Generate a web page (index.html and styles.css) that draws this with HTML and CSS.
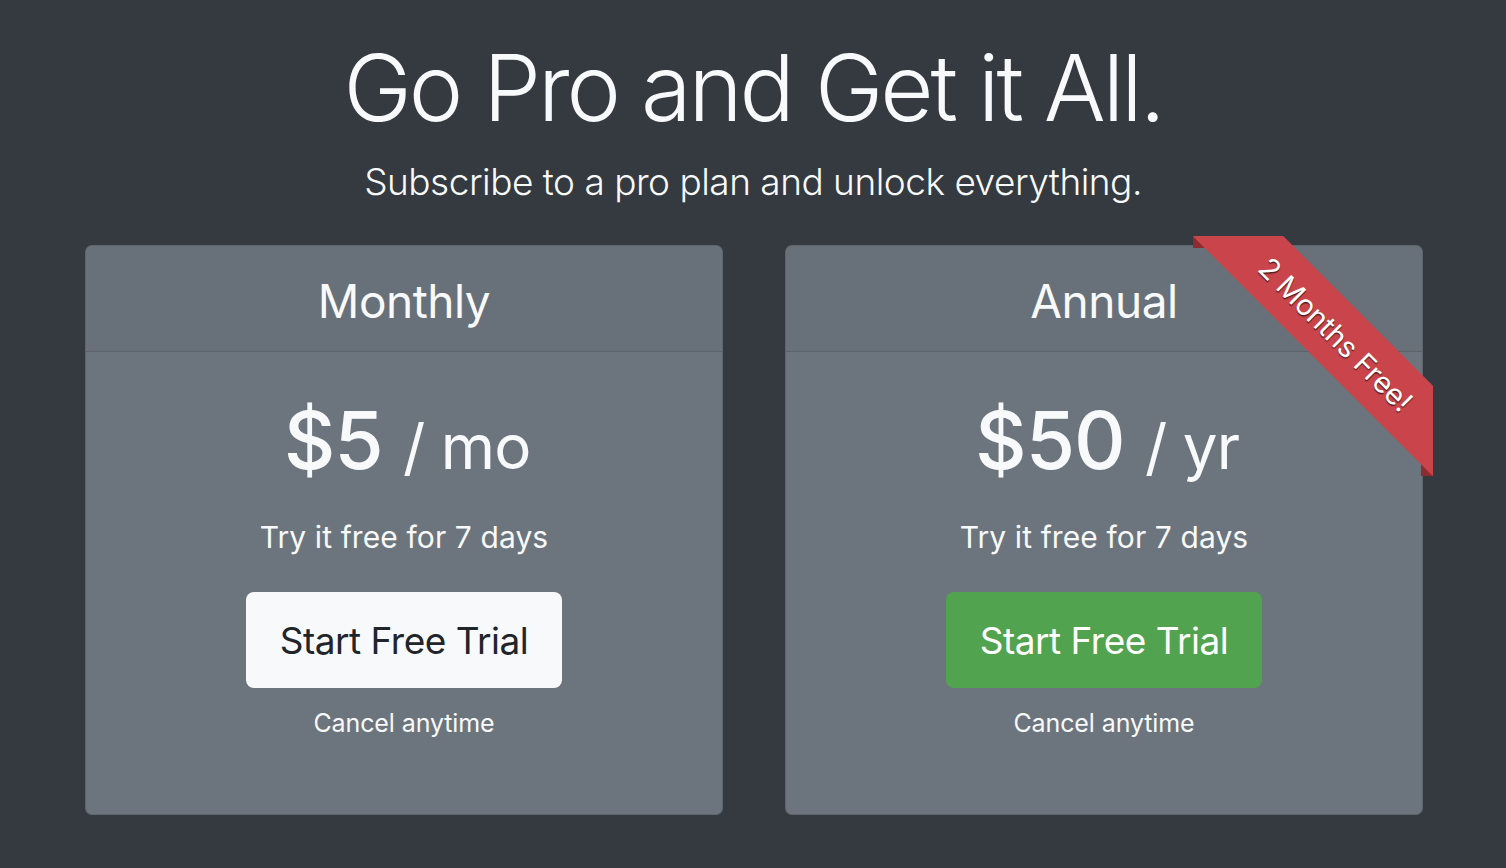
FILE: index.html
```html
<!DOCTYPE html>
<html lang="en">
<head>
<meta charset="utf-8">
<title>Go Pro</title>
<link rel="stylesheet" href="styles.css">
</head>
<body>
<main class="page">
  <header class="hero">
    <h1 class="hero-title">Go Pro and Get it All.</h1>
    <p class="hero-lead">Subscribe to a pro plan and unlock everything.</p>
  </header>
  <section class="plans">
    <div class="card">
      <div class="card-header"><h2 class="plan-name">Monthly</h2></div>
      <div class="card-body">
        <div class="price">$5 <small class="price-unit">/ mo</small></div>
        <p class="trial">Try it free for 7 days</p>
        <a class="btn btn-light">Start Free Trial</a>
        <p class="cancel">Cancel anytime</p>
      </div>
    </div>
    <div class="card">
      <div class="ribbon-wrap">
        <span class="fold fold-top"></span>
        <span class="fold fold-bottom"></span>
        <div class="ribbon"><span class="ribbon-text">2 Months Free!</span></div>
      </div>
      <div class="card-header"><h2 class="plan-name">Annual</h2></div>
      <div class="card-body">
        <div class="price">$50 <small class="price-unit">/ yr</small></div>
        <p class="trial">Try it free for 7 days</p>
        <a class="btn btn-success">Start Free Trial</a>
        <p class="cancel">Cancel anytime</p>
      </div>
    </div>
  </section>
</main>
</body>
</html>
```
FILE: styles.css
```css
html, body {
  margin: 0;
  padding: 0;
}
body {
  background: #343a40;
  color: #f8f9fa;
  font-family: Inter, Roboto, "Liberation Sans", sans-serif;
  height: 868px;
  overflow: hidden;
}
.page {
  display: flex;
  flex-direction: column;
  align-items: center;
}
.hero {
  text-align: center;
  padding-top: 33px;
}
.hero-title {
  margin: 0;
  font-size: 92px;
  font-weight: 300;
  line-height: 110px;
  letter-spacing: -3px;
}
.hero-lead {
  margin: 17px 0 0;
  font-size: 37px;
  font-weight: 300;
  line-height: 44px;
  letter-spacing: -0.5px;
}
.plans {
  margin-top: 41px;
  padding-left: 2px;
  box-sizing: border-box;
  display: grid;
  grid-template-columns: 638px 638px;
  gap: 62px;
  justify-content: center;
  width: 100%;
}
.card {
  position: relative;
  height: 570px;
  box-sizing: border-box;
  background: #6c757d;
  border: 1px solid rgba(0, 0, 0, 0.125);
  border-radius: 7px;
  display: flex;
  flex-direction: column;
}
.card-header {
  height: 106px;
  box-sizing: border-box;
  padding-top: 4px;
  background: rgba(0, 0, 0, 0.03);
  border-bottom: 1px solid rgba(0, 0, 0, 0.125);
  border-radius: 6px 6px 0 0;
  display: flex;
  align-items: center;
  justify-content: center;
}
.plan-name {
  margin: 0;
  font-size: 46px;
  font-weight: 400;
  line-height: 1;
  letter-spacing: -0.5px;
}
.card-body {
  display: flex;
  flex-direction: column;
  align-items: center;
  padding-top: 40px;
}
.price {
  font-size: 80px;
  font-weight: 500;
  line-height: 96px;
  letter-spacing: -1px;
  padding-left: 6px;
}
.price-unit {
  font-size: 62px;
  font-weight: 400;
}
.trial {
  margin: 22px 0 0;
  font-size: 30px;
  line-height: 40px;
  letter-spacing: 0.1px;
}
.btn {
  margin-top: 35px;
  width: 316px;
  height: 96px;
  box-sizing: border-box;
  border-radius: 8px;
  display: flex;
  align-items: center;
  justify-content: center;
  font-size: 37px;
  letter-spacing: -0.5px;
}
.btn-light {
  background: #f8f9fa;
  color: #212529;
}
.btn-success {
  background: #51a34f;
  color: #ffffff;
}
.cancel {
  margin: 18px 0 0;
  font-size: 25px;
  line-height: 34px;
  letter-spacing: -0.1px;
}
.ribbon-wrap {
  position: absolute;
  top: -10px;
  right: -11px;
  width: 240px;
  height: 240px;
  overflow: hidden;
  z-index: 2;
}
.fold {
  position: absolute;
  width: 12px;
  height: 12px;
  background: #8c2c31;
}
.fold-top {
  top: 0;
  left: 0;
}
.fold-bottom {
  bottom: 0;
  right: 0;
}
.ribbon {
  position: absolute;
  left: -27px;
  top: 66px;
  width: 340px;
  height: 64px;
  background: #c9444b;
  transform: rotate(45deg);
  display: flex;
  align-items: center;
  justify-content: center;
}
.ribbon-text {
  color: #ffffff;
  font-size: 29px;
  letter-spacing: -0.2px;
  text-shadow: 1px 1px 1px rgba(0, 0, 0, 0.6);
}
```
